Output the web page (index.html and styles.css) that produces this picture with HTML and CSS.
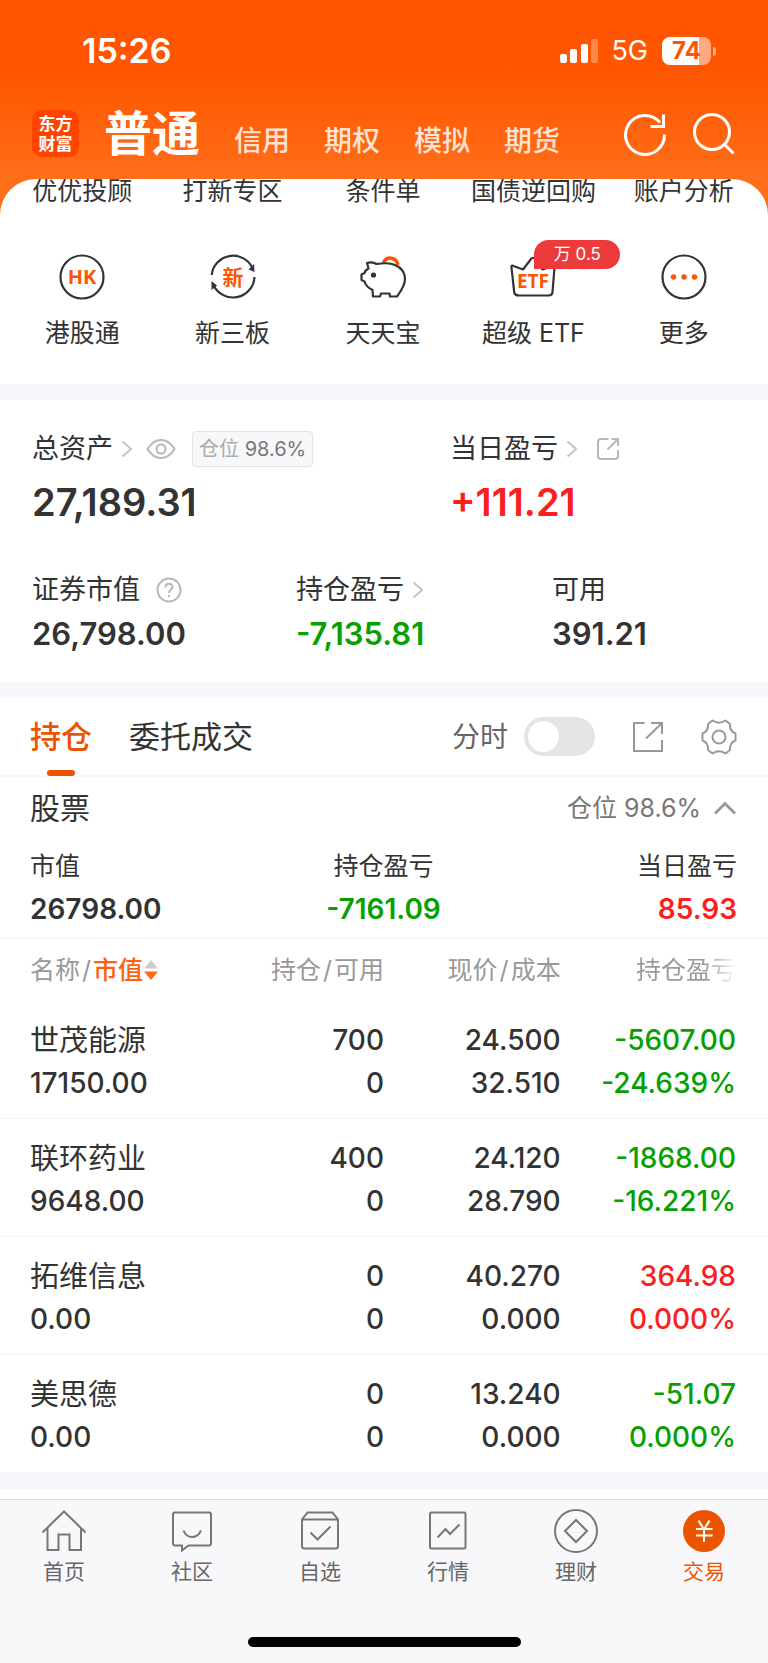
FILE: index.html
```html
<!DOCTYPE html>
<html lang="zh-CN">
<head>
<meta charset="utf-8">
<meta name="viewport" content="width=device-width, initial-scale=1">
<title>交易</title>
<link rel="stylesheet" href="styles.css">
</head>
<body>
<header class="top">
  <div class="status">
    <time class="clock">15:26</time>
    <div class="status-right">
      <svg width="40" height="26" viewBox="0 0 40 26" fill="#fff" aria-hidden="true"><rect x="1" y="16" width="7" height="9" rx="2"/><rect x="11" y="11" width="7" height="14" rx="2"/><rect x="22" y="6" width="7" height="19" rx="2"/><rect x="32" y="1" width="7" height="24" rx="2" opacity=".3"/></svg>
      <span class="network">5G</span>
      <div class="battery"><span class="battery-body">74</span><span class="battery-tip"></span></div>
    </div>
  </div>
  <div class="nav">
    <div class="logo"><span>东方</span><span>财富</span></div>
    <nav class="accounts">
      <a class="account current" href="#normal">普通</a>
      <a class="account" href="#credit">信用</a>
      <a class="account" href="#option">期权</a>
      <a class="account" href="#demo">模拟</a>
      <a class="account" href="#futures">期货</a>
    </nav>
    <div class="nav-actions">
      <button class="plain" aria-label="刷新"><svg width="44" height="44" viewBox="0 0 44 44" fill="none" stroke="#fff" stroke-width="3"><path d="M41.500 22.500A19.500 19.500 0 1 1 37 10.500"/><path d="M40.500 2.500V14.500H27.500"/></svg></button>
      <button class="plain" aria-label="搜索"><svg width="44" height="44" viewBox="0 0 44 44" fill="none" stroke="#fff" stroke-width="3"><circle cx="20" cy="20" r="17.500"/><path d="M32 32L41.500 41.500"/></svg></button>
    </div>
  </div>
</header>

<main>
<section class="sheet">
  <div class="shortcuts first">
    <a href="#a1">优优投顾</a><a href="#a2">打新专区</a><a href="#a3">条件单</a><a href="#a4">国债逆回购</a><a href="#a5">账户分析</a>
  </div>
  <div class="shortcuts icons">
    <a href="#b1"><svg width="48" height="48" viewBox="0 0 48 48"><circle cx="24" cy="24" r="21.500" fill="none" stroke="#333" stroke-width="2.200"/><text class="glyph" x="24" y="31" font-size="20" text-anchor="middle">HK</text></svg>港股通</a>
    <a href="#b2"><svg width="48" height="48" viewBox="0 0 48 48"><g fill="none" stroke="#333" stroke-width="2.200"><path d="M2.700 22A21.500 21.500 0 0 1 43.500 15"/><path d="M45.500 24A21.500 21.500 0 0 1 4.500 32"/></g><path d="M45 11L45.500 19L39.500 16.500Z M2.500 37V28L8 32.500Z" fill="#333"/><text class="glyph" x="24" y="32" font-size="21" text-anchor="middle">新</text></svg>新三板</a>
    <a href="#b3"><svg width="48" height="48" viewBox="0 0 48 48" fill="none"><path d="M25 8.500A7.500 7.500 0 0 1 38.500 10.500" stroke="#ff5500" stroke-width="3.600" stroke-linecap="round"/><path d="M8 10C12 8.700 15 9.200 17.500 11C23 10.200 31 9.500 36 12C42 14.500 46 19 46 26C46 33 41.500 38.500 38 43.500H31L30.500 40.500H22L21 43.500H14L13.500 37C9.500 35 6.500 32 5.500 28.500L2.500 27V21.500L5.500 20C6 18 7.500 16.500 9.500 15.500Z" stroke="#333" stroke-width="2.200" stroke-linejoin="round"/><circle cx="14.500" cy="22" r="2.600" fill="#333"/></svg>天天宝</a>
    <a href="#b4"><span class="badge-wrap"><svg width="48" height="48" viewBox="0 0 48 48"><path d="M2.500 14.500C2 12.500 3 12 4.500 13L14 16.500L22 6Q24 3.500 26 6L33.500 16.500L43.500 13C45 12.500 46 13 45.500 14.500L43.500 39C43.300 41.500 42 42.500 39.500 42.500H10C7 42.500 5.500 41.500 5.200 39Z" fill="none" stroke="#333" stroke-width="2.200" stroke-linejoin="round"/><text class="glyph" x="24" y="35" font-size="19" text-anchor="middle">ETF</text></svg><span class="badge">万 0.5</span></span>超级 ETF</a>
    <a href="#b5"><svg width="48" height="48" viewBox="0 0 48 48"><circle cx="24" cy="24" r="21.500" fill="none" stroke="#333" stroke-width="2.200"/><g fill="#ff5500"><circle cx="13.500" cy="24" r="2.700"/><circle cx="24" cy="24" r="2.700"/><circle cx="34.500" cy="24" r="2.700"/></g></svg>更多</a>
  </div>
</section>

<section class="assets">
  <div class="asset-row totals">
    <div>
      <div class="label tall"><a href="#total">总资产<svg class="chevron" width="12" height="18" viewBox="0 0 12 18" fill="none" stroke="#c4c4c4" stroke-width="2"><path d="M1.500 1.500L10 9L1.500 16.500"/></svg></a>
        <button class="plain eye" aria-label="隐藏资产"><svg width="30" height="22" viewBox="0 0 30 22" fill="none" stroke="#b8b8b8" stroke-width="2"><path d="M1.500 11Q7 2 15 2T28.500 11Q23 20 15 20T1.500 11Z"/><circle cx="15" cy="11" r="4.500"/></svg></button>
        <span class="tag">仓位 <b>98.6%</b></span></div>
      <div class="value big">27,189.31</div>
    </div>
    <div>
      <div class="label tall"><a href="#today">当日盈亏<svg class="chevron" width="12" height="18" viewBox="0 0 12 18" fill="none" stroke="#c4c4c4" stroke-width="2"><path d="M1.500 1.500L10 9L1.500 16.500"/></svg></a>
        <button class="plain share-small" aria-label="分享"><svg width="24" height="24" viewBox="0 0 24 24" fill="none" stroke="#b8b8b8" stroke-width="2"><path d="M12.500 2H5Q2 2 2 5V19Q2 22 5 22H19Q22 22 22 19V13"/><path d="M11.500 12.500L22 2M15.500 2H22V9"/></svg></button></div>
      <div class="value big up">+111.21</div>
    </div>
  </div>
  <div class="asset-row details">
    <div>
      <div class="label">证券市值<button class="plain help" aria-label="说明"><svg width="26" height="26" viewBox="0 0 26 26" fill="none" stroke="#b8b8b8" stroke-width="2"><circle cx="13" cy="13" r="11.500"/><path d="M9.500 10.500C9.500 5.500 16.500 5.500 16.500 10C16.500 12.700 13 12.500 13 16M13 18V20"/></svg></button></div>
      <div class="value">26,798.00</div>
    </div>
    <div>
      <div class="label"><a href="#pl">持仓盈亏<svg class="chevron" width="12" height="18" viewBox="0 0 12 18" fill="none" stroke="#c4c4c4" stroke-width="2"><path d="M1.500 1.500L10 9L1.500 16.500"/></svg></a></div>
      <div class="value down">-7,135.81</div>
    </div>
    <div>
      <div class="label">可用</div>
      <div class="value">391.21</div>
    </div>
  </div>
</section>

<section class="holdings">
  <div class="tabs">
    <button class="plain tab active">持仓</button>
    <button class="plain tab">委托成交</button>
    <div class="tools">
      <label class="minute" for="minute">分时</label>
      <input class="switch" id="minute" type="checkbox" role="switch">
      <button class="plain tool-share" aria-label="分享持仓"><svg width="32" height="32" viewBox="0 0 32 32" fill="none" stroke="#999" stroke-width="2"><path d="M12.500 2H2V30H30V19"/><path d="M14 17.500L30 2M19 2H30V13"/></svg></button>
      <button class="plain" aria-label="设置"><svg width="36" height="36" viewBox="0 0 36 36" fill="none" stroke="#999" stroke-width="2" stroke-linejoin="round"><path d="M7 5L11.500 1.500Q18 6 24.500 1.500L29 5Q28.500 12.500 34.500 14.500V21.500Q28.500 23.500 29 31L24.500 34.500Q18 30 11.500 34.500L7 31Q7.500 23.500 1.500 21.500V14.500Q7.500 12.500 7 5Z"/><circle cx="18" cy="18" r="6.500"/></svg></button>
    </div>
  </div>
  <div class="group">
    <h2>股票</h2>
    <button class="plain fold">仓位 98.6%<svg width="22" height="14" viewBox="0 0 22 14" fill="none" stroke="#999" stroke-width="3"><path d="M1 12.500L11 2.500L21 12.500"/></svg></button>
  </div>
  <div class="summary">
    <div><span>市值</span><strong>26798.00</strong></div>
    <div><span>持仓盈亏</span><strong class="down">-7161.09</strong></div>
    <div><span>当日盈亏</span><strong class="up">85.93</strong></div>
  </div>
  <table class="stocks">
    <colgroup><col class="edge"><col><col><col class="edge"></colgroup>
    <thead><tr>
      <th scope="col"><span class="sort">名称<i>/</i><b>市值</b><svg width="16" height="22" viewBox="0 0 16 22"><path d="M8 1L15 9.500H1Z" fill="#ccc"/><path d="M8 21L15 12.500H1Z" fill="#ff6a1a"/></svg></span></th>
      <th scope="col">持仓<i>/</i>可用</th><th scope="col">现价<i>/</i>成本</th><th scope="col"><span class="fade">持仓盈亏</span></th>
    </tr></thead>
    <tbody>
      <tr><td><span class="name">世茂能源</span>17150.00</td><td><span>700</span>0</td><td><span>24.500</span>32.510</td><td class="down"><span>-5607.00</span>-24.639%</td></tr>
      <tr><td><span class="name">联环药业</span>9648.00</td><td><span>400</span>0</td><td><span>24.120</span>28.790</td><td class="down"><span>-1868.00</span>-16.221%</td></tr>
      <tr><td><span class="name">拓维信息</span>0.00</td><td><span>0</span>0</td><td><span>40.270</span>0.000</td><td class="up"><span>364.98</span>0.000%</td></tr>
      <tr><td><span class="name">美思德</span>0.00</td><td><span>0</span>0</td><td><span>13.240</span>0.000</td><td class="down"><span>-51.07</span>0.000%</td></tr>
    </tbody>
  </table>
</section>
</main>

<footer class="bottom">
  <nav class="tabbar">
    <a href="#home"><svg width="44" height="44" viewBox="0 0 44 44"><path d="M.500 23.500L22 2.500L43.500 23.500M5.500 19.500V41H16.500V25.500H27.500V41H39V19.500"/></svg>首页</a>
    <a href="#community"><svg width="44" height="44" viewBox="0 0 44 44"><path d="M5 3.500H39Q41 3.500 41 5.500V34.500Q41 36.500 39 36.500H18.500L12 41.500V36.500H5Q3 36.500 3 34.500V5.500Q3 3.500 5 3.500Z"/><path d="M13.500 21.500Q16 28 22 28T31 21.500"/></svg>社区</a>
    <a href="#watch"><svg width="44" height="44" viewBox="0 0 44 44"><path d="M4 10.500L9.500 3.500H34.500L40 10.500V37Q40 39.500 37.500 39.500H6.500Q4 39.500 4 37ZM4 10.500H40M12.500 23.500L19.500 30.500L32.500 17.500"/></svg>自选</a>
    <a href="#market"><svg width="44" height="44" viewBox="0 0 44 44"><rect x="4" y="3.500" width="35.500" height="36" rx="1.500"/><path d="M11.500 28.500L19.500 20L24 25L33.500 15.500"/></svg>行情</a>
    <a href="#wealth"><svg width="44" height="44" viewBox="0 0 44 44"><circle cx="22" cy="22" r="21"/><path d="M22 11L33 22L22 33L11 22Z"/></svg>理财</a>
    <a class="active" href="#trade"><svg width="44" height="44" viewBox="0 0 44 44"><circle class="coin" cx="22" cy="22" r="21"/><path class="yen" d="M16.500 11.500L22 20.500L27.500 11.500M22 20.500V33M14 20H30.500M14 26.500H30.500"/></svg>交易</a>
  </nav>
  <div class="home-indicator"></div>
</footer>
</body>
</html>
```
FILE: styles.css
```css
* { box-sizing: border-box; }
body {
  margin: 0;
  background: #fff;
  color: #333;
  font-family: Inter, "Noto Sans CJK SC", sans-serif;
  font-size: 25px;
  line-height: 28px;
}
a { color: inherit; text-decoration: none; }
svg { display: block; flex: none; }
h2 { margin: 0; font-weight: 400; }
.plain { padding: 0; border: 0; background: none; color: inherit; font: inherit; cursor: pointer; }
.up { color: #fa2020; }
.down { color: #06a000; }

/* header */
.top {
  padding-bottom: 58px;
  background: linear-gradient(#ff5500 0, #ff5600 78px, #ff6f1a 179px);
  color: #fff;
}
.status { display: flex; justify-content: space-between; align-items: center; height: 102px; padding: 0 52px 0 82px; }
.clock { font-size: 34px; font-weight: 600; line-height: 40px; }
.status-right { display: flex; align-items: center; }
.network { margin: 0 14px 0 12px; font-size: 27px; font-weight: 400; }
.battery { display: flex; align-items: center; gap: 2px; }
.battery-body {
  width: 49px;
  border-radius: 8px;
  background: linear-gradient(90deg, #fff 75%, #ffaa80 75%);
  color: #ff5500;
  font-size: 24px;
  font-weight: 700;
  line-height: 28px;
  text-align: center;
}
.battery-tip { width: 3px; height: 9px; border-radius: 0 3px 3px 0; background: #ffaa80; }
.nav { display: flex; align-items: center; height: 77px; padding: 0 32px 14px; }
.logo {
  display: grid;
  place-content: center;
  width: 47px;
  height: 47px;
  border-radius: 10px;
  background: #ff4400;
  font-size: 17px;
  font-weight: 700;
  line-height: 20px;
}
.accounts { display: flex; align-items: baseline; gap: 34px; margin-left: 25px; padding-top: 8px; }
.account { color: #ffe2d3; font-size: 28px; font-weight: 500; line-height: 48px; }
.account.current { color: #fff; font-size: 48px; font-weight: 700; }
.nav-actions { display: flex; gap: 25px; margin-left: auto; }

/* shortcuts */
.sheet { margin-top: -58px; padding-bottom: 37px; border-radius: 36px 36px 0 0; background: #fff; overflow: hidden; }
.shortcuts { display: grid; grid-template-columns: repeat(5, 1fr); padding: 0 9px 0 7px; text-align: center; }
.shortcuts.first { margin-top: -2px; }
.icons { padding-top: 48px; }
.icons a { display: flex; flex-direction: column; align-items: center; gap: 18px; font-size: 25px; }
.glyph { fill: #ff5500; font-family: "Open Sans", "Noto Sans CJK SC", sans-serif; font-weight: 700; }
.badge-wrap { position: relative; }
.badge {
  position: absolute;
  left: 25px;
  top: -13px;
  width: 86px;
  border-radius: 15px 15px 15px 0;
  background: #ed3b3b;
  color: #fff;
  font-size: 17px;
  line-height: 29px;
}

/* assets */
.assets { padding: 30px 0 28px 32px; border-top: 16px solid #f5f7fa; }
.asset-row { display: grid; }
.totals { grid-template-columns: 418fr 318fr; }
.details { grid-template-columns: 33fr 32fr 27fr; margin-top: 49px; }
.label, .label a { display: flex; align-items: center; }
.label { height: 34px; font-size: 27px; }
.label.tall { height: 37px; }
.chevron { margin-left: 8px; }
.eye { margin-left: 13px; }
.share-small { margin-left: 18px; }
.help { margin-left: 16px; }
.tag { margin-left: 16px; padding: 0 6px; border: 1px solid #e4e4e8; border-radius: 4px; background: #f8f8fa; color: #aaa; font-size: 20px; line-height: 34px; }
.tag b { color: #777; font-weight: 400; }
.value { margin-top: 7px; font-size: 31px; font-weight: 600; line-height: 40px; }
.value.big { margin-top: 13px; font-size: 38px; line-height: 44px; }

/* holdings */
.holdings { border-top: 16px solid #f5f7fa; border-bottom: 17px solid #f5f7fa; }
.tabs { display: flex; align-items: center; height: 79px; padding: 0 31px 0 30px; border-bottom: 2px solid #f6f7f9; }
.tab { position: relative; height: 78px; margin-right: 37px; font-size: 31px; }
.tab.active { color: #ec5500; font-weight: 500; }
.tab.active::after { content: ""; position: absolute; left: 17px; bottom: 0; width: 28px; height: 6px; border-radius: 3px; background: #ec5500; }
.tools { display: flex; align-items: center; margin-left: auto; }
.minute { color: #666; font-size: 28px; }
.switch { appearance: none; display: flex; width: 71px; height: 39px; margin: 0 37px 0 16px; padding: 4px; border-radius: 20px; background: #e4e4e6; }
.switch::before { content: ""; width: 31px; height: 31px; border-radius: 50%; background: #fff; }
.switch:checked::before { margin-left: auto; }
.tool-share { margin-right: 37px; }
.group { display: flex; justify-content: space-between; align-items: center; height: 62px; padding: 0 32px 0 30px; }
.group h2 { font-size: 30px; }
.fold { display: flex; align-items: center; gap: 13px; color: #777; }
.summary { display: grid; grid-template-columns: repeat(3, 1fr); padding: 13px 31px 14px 30px; border-bottom: 2px solid #f6f7f9; text-align: center; }
.summary div { display: grid; gap: 15px; }
.summary div:first-child { text-align: left; }
.summary div:last-child { text-align: right; }
.summary strong { font-size: 28px; font-weight: 600; }
.stocks { width: 100%; border-collapse: collapse; table-layout: fixed; text-align: right; }
.edge { width: 27%; }
.stocks th { height: 61px; padding: 0; color: #999; font-size: 25px; font-weight: 400; }
.stocks i { margin: 0 2px; font-style: normal; }
.stocks b { color: #ff6010; font-weight: 500; }
.stocks th:first-child, .stocks td:first-child { padding-left: 30px; text-align: left; }
.stocks th:last-child, .stocks td:last-child { padding-right: 32px; }
.sort { display: flex; align-items: center; }
.fade { background: linear-gradient(90deg, #999 70%, #fff); background-clip: text; color: transparent; }
.stocks td { height: 118px; padding: 6px 0 0; font-size: 28px; font-weight: 500; line-height: 43px; }
.stocks tbody tr + tr { border-top: 1px solid #f4f4f6; }
.stocks td span { display: block; }
.stocks .name { font-size: 29px; font-weight: 400; }

/* bottom bar */
.bottom { margin-top: 10px; padding-bottom: 17px; border-top: 1px solid #dedee0; background: #f8f8fb; }
.tabbar { display: grid; grid-template-columns: repeat(6, 1fr); padding-top: 9px; color: #666; font-size: 21px; }
.tabbar a { display: flex; flex-direction: column; align-items: center; gap: 5px; }
.tabbar svg { fill: none; stroke: #777; stroke-width: 2; }
.tabbar .active { color: #ec5500; }
.tabbar .coin { fill: #ec5500; stroke: none; }
.tabbar .yen { stroke: #fff; }
.home-indicator { width: 273px; height: 10px; margin: 51px auto 0; border-radius: 5px; background: #000; }
```
